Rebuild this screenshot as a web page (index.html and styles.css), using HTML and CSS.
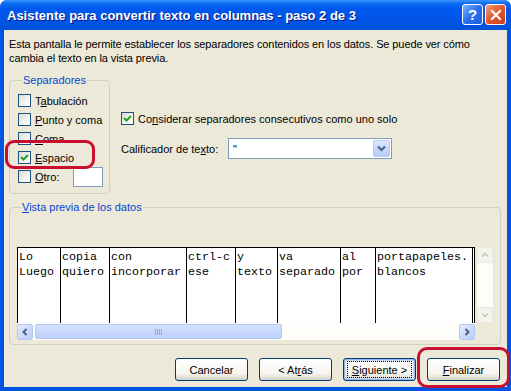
FILE: index.html
```html
<!DOCTYPE html>
<html lang="es">
<head>
    <meta charset="UTF-8">
    <meta name="viewport" content="width=device-width, initial-scale=1.0">
    <link rel="stylesheet" href="styles.css">
    <title>Asistente para convertir texto en columnas</title>
</head>
<body>
    <div class="window">
        <div class="titlebar">
            <span class="title">Asistente para convertir texto en columnas - paso 2 de 3</span>
            <div class="title-buttons">
                <span class="tbtn help">?</span>
                <span class="tbtn close">
                    <svg width="12" height="12" viewBox="0 0 12 12"><path d="M2 2 L10 10 M10 2 L2 10" stroke="#fff" stroke-width="2.2" stroke-linecap="square"/></svg>
                </span>
            </div>
        </div>

        <div class="content">
            <p class="intro">Esta pantalla le permite establecer los separadores contenidos en los datos. Se puede ver cómo cambia el texto en la vista previa.</p>

            <div class="options">
                <fieldset class="group separators">
                    <legend>Separadores</legend>
                    <div class="row"><span class="box"></span><span>T<u>a</u>bulación</span></div>
                    <div class="row"><span class="box"></span><span><u>P</u>unto y coma</span></div>
                    <div class="row"><span class="box"></span><span><u>C</u>oma</span></div>
                    <div class="row"><span class="box checked"><svg width="11" height="11" viewBox="0 0 11 11"><path d="M2 5 L4.5 7.5 L9 3" fill="none" stroke="#21a121" stroke-width="2"/></svg></span><span><u>E</u>spacio</span></div>
                    <div class="row"><span class="box"></span><span><u>O</u>tro:</span><span class="other-input"></span></div>
                </fieldset>

                <div class="side">
                    <div class="row"><span class="box checked"><svg width="11" height="11" viewBox="0 0 11 11"><path d="M2 5 L4.5 7.5 L9 3" fill="none" stroke="#21a121" stroke-width="2"/></svg></span><span>Co<u>n</u>siderar separadores consecutivos como uno solo</span></div>
                    <div class="row">
                        <span class="qual-label">Calificador de te<u>x</u>to:</span>
                        <div class="select">
                            <span class="select-value">"</span>
                            <span class="select-btn">
                                <svg width="9" height="7" viewBox="0 0 9 7"><path d="M1 1.5 L4.5 5 L8 1.5" fill="none" stroke="#4d6185" stroke-width="2"/></svg>
                            </span>
                        </div>
                    </div>
                </div>
            </div>

            <fieldset class="group preview">
                <legend><u>V</u>ista previa de los datos</legend>
                <div class="preview-grid">
                    <div class="data">
                        <div class="col">Lo<br>Luego</div>
                        <div class="col">copia<br>quiero</div>
                        <div class="col">con<br>incorporar</div>
                        <div class="col">ctrl-c<br>ese</div>
                        <div class="col">y<br>texto</div>
                        <div class="col">va<br>separado</div>
                        <div class="col">al<br>por</div>
                        <div class="col last">portapapeles.<br>blancos</div>
                    </div>
                    <div class="vscroll">
                        <span class="sbtn off"><svg width="8" height="6" viewBox="0 0 8 6"><path d="M1 4.5 L4 1.5 L7 4.5" fill="none" stroke="#c9c8bd" stroke-width="1.6"/></svg></span>
                        <span class="vtrack"></span>
                        <span class="sbtn off"><svg width="8" height="6" viewBox="0 0 8 6"><path d="M1 1.5 L4 4.5 L7 1.5" fill="none" stroke="#c9c8bd" stroke-width="1.6"/></svg></span>
                    </div>
                    <div class="hscroll">
                        <span class="sbtn"><svg width="6" height="8" viewBox="0 0 6 8"><path d="M4.5 1 L1.5 4 L4.5 7" fill="none" stroke="#4d6185" stroke-width="2"/></svg></span>
                        <span class="thumb"><span class="grip"></span></span>
                        <span class="htrack"></span>
                        <span class="sbtn"><svg width="6" height="8" viewBox="0 0 6 8"><path d="M1.5 1 L4.5 4 L1.5 7" fill="none" stroke="#4d6185" stroke-width="2"/></svg></span>
                    </div>
                </div>
            </fieldset>

            <div class="buttons">
                <span class="btn">Cancelar</span>
                <span class="btn">&lt; At<u>r</u>ás</span>
                <span class="btn focused"><span class="focus-ring"><u>S</u>iguiente &gt;</span></span>
                <span class="btn"><u>F</u>inalizar</span>
            </div>
        </div>

        <div class="mark mark-space"></div>
        <div class="mark mark-finish"></div>
    </div>
</body>
</html>
```

FILE: styles.css
```css
body {
    margin: 0;
    font-family: "Liberation Sans", Arial, sans-serif;
    font-size: 11px;
    color: #000000;
}

.window {
    position: relative;
    width: 511px;
    height: 391px;
    box-sizing: border-box;
    background: #0053e3;
    border-radius: 7px 7px 0 0;
    display: flex;
    flex-direction: column;
    overflow: hidden;
}

.titlebar {
    height: 30px;
    flex: none;
    display: flex;
    align-items: center;
    justify-content: space-between;
    padding: 0 5px 0 7px;
    background: linear-gradient(#3d95ff 0%, #0a6af0 12%, #0058ee 30%, #0053e3 80%, #0050d8 100%);
}

.title {
    color: #ffffff;
    font-weight: bold;
    font-size: 13px;
    text-shadow: 1px 1px 0 #0a1883;
    margin-top: 1px;
}

.title-buttons {
    display: flex;
    gap: 2px;
    margin-top: -1px;
}

.tbtn {
    width: 19px;
    height: 19px;
    border: 1px solid #ffffff;
    border-radius: 3px;
    display: flex;
    align-items: center;
    justify-content: center;
    color: #ffffff;
    font-weight: bold;
    font-size: 15px;
}

.help {
    background: linear-gradient(135deg, #7fb2ff 0%, #2a6ff0 50%, #1c5ce0 100%);
}

.close {
    background: linear-gradient(135deg, #f0a080 0%, #e2552a 50%, #c93f1a 100%);
}

.content {
    flex: 1;
    margin: 0 4px 4px 4px;
    background: #ece9d8;
    padding: 0 7px 0 5px;
}

.intro {
    margin: 7px -4px 0 0;
    line-height: 14px;
    letter-spacing: -0.1px;
}

.options {
    display: flex;
    margin-top: 8px;
}

.group {
    margin: 0;
    border: 1px solid #d0d0bf;
    border-radius: 4px;
}

.group legend {
    color: #0046d5;
    padding: 0 1px;
    margin-left: 4px;
    line-height: 14px;
}

.separators {
    width: 101px;
    box-sizing: border-box;
    padding: 4px 0 7px 8px;
}

.row {
    display: flex;
    align-items: center;
    gap: 4px;
    height: 19px;
}

.box {
    width: 11px;
    height: 11px;
    flex: none;
    border: 1px solid #1c5180;
    background: linear-gradient(135deg, #dcdcd7 0%, #f4f4f0 60%, #ffffff 100%);
    display: flex;
    align-items: center;
    justify-content: center;
}

.other-input {
    width: 28px;
    height: 18px;
    margin-left: 10px;
    border: 1px solid #7f9db9;
    background: #ffffff;
}

.side {
    padding: 36px 0 0 11px;
    display: flex;
    flex-direction: column;
    gap: 10px;
}

.side .row:last-child {
    height: 21px;
}

.qual-label {
    width: 103px;
}

.select {
    width: 162px;
    height: 19px;
    border: 1px solid #7f9db9;
    background: #ffffff;
    display: flex;
    align-items: center;
    justify-content: space-between;
}

.select-value {
    padding-left: 4px;
}

.select-btn {
    width: 15px;
    height: 15px;
    margin-right: 1px;
    border: 1px solid #b9ccf5;
    border-radius: 2px;
    background: linear-gradient(#dce7fe, #b5cbfa);
    display: flex;
    align-items: center;
    justify-content: center;
}

.preview {
    margin-top: 6px;
    padding: 33px 7px 4px 7px;
}

.preview-grid {
    display: grid;
    grid-template-columns: 458px 16px;
    column-gap: 2px;
}

.data {
    display: grid;
    grid-template-columns: 43px 49px 77px 49px 42px 63px 35px 100px;
    height: 76px;
    border-top: 1px solid #000000;
    background: #ffffff;
    box-sizing: border-box;
    font-family: "Liberation Mono", "Courier New", monospace;
    font-size: 11.67px;
    line-height: 15px;
}

.col {
    border-left: 1px solid #000000;
    padding: 2px 0 0 1px;
    white-space: nowrap;
    overflow: hidden;
}

.col.last {
    border-right: 3px double #000000;
}

.vscroll {
    display: flex;
    flex-direction: column;
    background: #fdfdfa;
}

.vtrack {
    flex: 1;
}

.hscroll {
    display: flex;
    height: 17px;
    background: #fdfdfa;
    padding: 1px 0;
    box-sizing: border-box;
}

.sbtn {
    width: 14px;
    height: 14px;
    flex: none;
    border: 1px solid #b4c8f6;
    border-radius: 2px;
    background: linear-gradient(135deg, #e2ebfe, #b9cdfb);
    display: flex;
    align-items: center;
    justify-content: center;
}

.sbtn.off {
    border-color: #e8e8e0;
    background: #f4f3ee;
}

.thumb {
    width: 245px;
    margin-left: 2px;
    border: 1px solid #b4c8f6;
    border-radius: 2px;
    background: linear-gradient(#d4e1fd, #bcd0fb);
    display: flex;
    align-items: center;
    justify-content: center;
}

.grip {
    width: 7px;
    height: 6px;
    background: repeating-linear-gradient(90deg, #8faaf0 0 1px, transparent 1px 2px);
}

.htrack {
    flex: 1;
}

.buttons {
    display: flex;
    justify-content: flex-end;
    gap: 11px;
    margin-top: 13px;
}

.btn {
    width: 73px;
    height: 23px;
    box-sizing: border-box;
    border: 1px solid #003c74;
    border-radius: 3px;
    background: linear-gradient(#ffffff 0%, #f5f4ef 70%, #d6d0c5 100%);
    display: flex;
    align-items: center;
    justify-content: center;
}

.btn.focused {
    box-shadow: inset 0 0 0 1px #98b8ea, inset 0 0 0 2px #c7d8f5;
}

.focus-ring {
    display: flex;
    align-items: center;
    justify-content: center;
    width: 63px;
    height: 15px;
    border: 1px dotted #000000;
}

.mark {
    position: absolute;
    border: 3px solid #c8102e;
    box-sizing: border-box;
}

.mark-space {
    left: 5px;
    top: 140px;
    width: 90px;
    height: 29px;
    border-radius: 9px;
}

.mark-finish {
    left: 417px;
    top: 347px;
    width: 93px;
    height: 41px;
    border-radius: 10px;
}
```
